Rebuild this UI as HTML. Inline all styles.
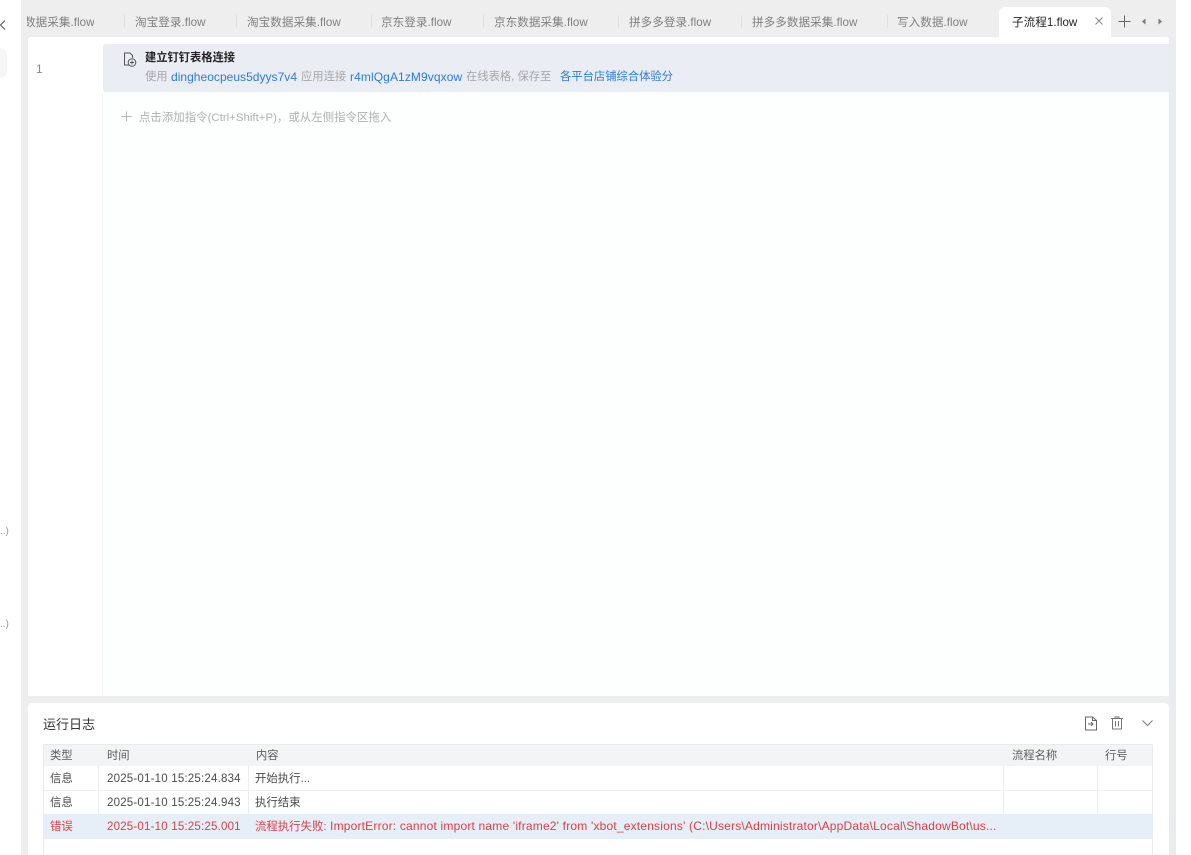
<!DOCTYPE html>
<html lang="zh-CN">
<head>
<meta charset="utf-8">
<style>
html,body{margin:0;padding:0;background:#fff}
body{width:1191px;height:855px;position:relative;overflow:hidden;font-family:"Liberation Sans","Noto Sans CJK SC",sans-serif;font-size:11px;color:#555}
.a{position:absolute;white-space:nowrap}
.tab{position:absolute;top:15px;height:15px;line-height:15px;font-size:11.6px;letter-spacing:.03px;color:#808080;white-space:nowrap}
.sep{position:absolute;top:15px;width:1px;height:13px;background:#e0e0e0}
.blue{color:#2a7cdb}
.g{color:#a6a6a6}
.h{position:absolute;top:748px;height:16px;line-height:16px;font-size:11.3px;color:#5c5c5c;white-space:nowrap}
.c{position:absolute;height:16px;line-height:16px;font-size:11.4px;color:#4a4a4a;white-space:nowrap}
.t{font-size:11.5px;letter-spacing:.2px}
.r{color:#d9404a}
.v{position:absolute;width:1px;background:#ecedf0}
</style>
</head>
<body>
<!-- outer panel -->
<div class="a" style="left:21px;top:0;width:1155px;height:855px;background:#eeeeef"></div>
<div class="a" style="left:1169px;top:37px;width:7px;height:818px;background:#eaecf2"></div>

<!-- left remnants -->
<svg class="a" style="left:0;top:18px" width="6" height="14" viewBox="0 0 6 14"><path d="M5 2.5 L0.5 7 L5 11.5" fill="none" stroke="#555" stroke-width="1"/></svg>
<div class="a" style="left:0;top:48px;width:7px;height:30px;background:#f6f6f7;border-radius:0 7px 7px 0"></div>
<div class="a" style="left:0;top:526px;font-size:10px;color:#999">..)</div>
<div class="a" style="left:0;top:619px;font-size:10px;color:#999">..)</div>

<!-- tabs -->
<div class="tab" style="left:27px;width:67px;overflow:hidden"><span style="margin-left:-3px">数据采集.flow</span></div>
<div class="sep" style="left:124px"></div>
<div class="tab" style="left:135px">淘宝登录.flow</div>
<div class="sep" style="left:236px"></div>
<div class="tab" style="left:247px">淘宝数据采集.flow</div>
<div class="sep" style="left:371px"></div>
<div class="tab" style="left:381px">京东登录.flow</div>
<div class="sep" style="left:483px"></div>
<div class="tab" style="left:494px">京东数据采集.flow</div>
<div class="sep" style="left:618px"></div>
<div class="tab" style="left:629px">拼多多登录.flow</div>
<div class="sep" style="left:741px"></div>
<div class="tab" style="left:752px">拼多多数据采集.flow</div>
<div class="sep" style="left:887px"></div>
<div class="tab" style="left:897px">写入数据.flow</div>

<div class="a" style="left:999px;top:7px;width:112px;height:31px;background:#fff;border-radius:6px 6px 0 0"></div>
<div class="tab" style="left:1012px;color:#222">子流程1.flow</div>
<svg class="a" style="left:1094px;top:16px" width="10" height="10" viewBox="0 0 10 10"><path d="M1.5 1.5 L8.5 8.5 M8.5 1.5 L1.5 8.5" stroke="#888" stroke-width="1" fill="none"/></svg>
<svg class="a" style="left:1118px;top:15px" width="13" height="13" viewBox="0 0 13 13"><path d="M6.5 .5 V12.5 M.5 6.5 H12.5" stroke="#666" stroke-width="1" fill="none"/></svg>
<svg class="a" style="left:1141px;top:18px" width="6" height="7" viewBox="0 0 6 7"><path d="M4.5 .5 L1 3.5 L4.5 6.5 Z" fill="#777"/></svg>
<svg class="a" style="left:1157px;top:18px" width="6" height="7" viewBox="0 0 6 7"><path d="M1.5 .5 L5 3.5 L1.5 6.5 Z" fill="#777"/></svg>

<!-- editor -->
<div class="a" style="left:28px;top:37px;width:1141px;height:659px;background:#fff;border-radius:3px 3px 0 0"></div>
<div class="a" style="left:103px;top:92px;width:1066px;height:604px;background:#fdfefe"></div>
<div class="a" style="left:102px;top:92px;width:1px;height:604px;background:#f5f7f7"></div>
<div class="a" style="left:103px;top:44px;width:1066px;height:48px;background:#eaedf4;border-radius:3px 0 0 3px"></div>
<div class="a" style="left:36px;top:62px;font-size:12px;line-height:15px;color:#8a8a8a">1</div>

<svg class="a" style="left:123px;top:52px" width="14" height="15" viewBox="0 0 14 15"><path d="M6 13 H1.5 V1 H7 L9.5 3.5 V6" fill="none" stroke="#555" stroke-width="1"/><circle cx="9" cy="10.5" r="3.8" fill="#eaedf4" stroke="#555" stroke-width="1"/><path d="M9 8.5 V12.5 M7 10.5 H11" stroke="#555" stroke-width="1"/></svg>
<div class="a" style="left:145px;top:51px;font-size:11.25px;line-height:15px;font-weight:bold;color:#222">建立钉钉表格连接</div>
<div class="a g" style="left:145px;top:70px;line-height:15px;font-size:11.3px">使用</div>
<div class="a blue" style="left:171px;top:70px;line-height:15px;font-size:12px;letter-spacing:.03px">dingheocpeus5dyys7v4</div>
<div class="a g" style="left:301px;top:70px;line-height:15px;font-size:11.3px">应用连接</div>
<div class="a blue" style="left:350px;top:70px;line-height:15px;font-size:12px;letter-spacing:.1px">r4mlQgA1zM9vqxow</div>
<div class="a g" style="left:466px;top:70px;line-height:15px;font-size:11.3px">在线表格, 保存至</div>
<div class="a blue" style="left:560px;top:70px;line-height:15px;font-size:11.3px">各平台店铺综合体验分</div>

<svg class="a" style="left:121px;top:111px" width="11" height="11" viewBox="0 0 11 11"><path d="M5.5 .5 V10.5 M.5 5.5 H10.5" stroke="#b5b5b5" stroke-width="1" fill="none"/></svg>
<div class="a" style="left:139px;top:111px;line-height:15px;font-size:11.45px;color:#b0b0b0">点击添加指令(Ctrl+Shift+P)，或从左侧指令区拖入</div>

<!-- log panel -->
<div class="a" style="left:28px;top:703px;width:1141px;height:152px;background:#fff;border-radius:4px 4px 0 0"></div>
<div class="a" style="left:43px;top:716px;font-size:13px;line-height:17px;color:#333">运行日志</div>

<svg class="a" style="left:1084px;top:716px" width="14" height="15" viewBox="0 0 14 15"><path d="M1.5 1 H8.5 L12.5 4.5 V14 H1.5 Z M8.5 1 V4.5 H12.5" fill="none" stroke="#666" stroke-width="1"/><path d="M4 8 H9 M7 6 L9 8 L7 10" fill="none" stroke="#666" stroke-width="1"/></svg>
<svg class="a" style="left:1110px;top:716px" width="14" height="14" viewBox="0 0 14 14"><path d="M1 2.5 H13 M5 2.5 V1 H9 V2.5 M2.5 2.5 V13 H11.5 V2.5 M5.5 5 V10.5 M8.5 5 V10.5" fill="none" stroke="#777" stroke-width="1"/></svg>
<svg class="a" style="left:1141px;top:719px" width="13" height="8" viewBox="0 0 13 8"><path d="M1.5 1.5 L6.5 6.5 L11.5 1.5" fill="none" stroke="#777" stroke-width="1"/></svg>

<!-- table -->
<div class="a" style="left:43px;top:744px;width:1110px;height:111px;border:solid #e8eaed;border-width:1px 1px 0 1px;border-radius:2px 2px 0 0;box-sizing:border-box"></div>
<div class="a" style="left:44px;top:745px;width:1108px;height:21px;background:#f2f4f6"></div>
<div class="h" style="left:50px">类型</div>
<div class="h" style="left:107px">时间</div>
<div class="h" style="left:256px">内容</div>
<div class="h" style="left:1012px">流程名称</div>
<div class="h" style="left:1105px">行号</div>

<div class="a" style="left:44px;top:790px;width:1108px;height:1px;background:#eceef0"></div>
<div class="a" style="left:44px;top:814px;width:1109px;height:25px;background:#e6eef7"></div>
<div class="v" style="left:98px;top:766px;height:48px"></div>
<div class="v" style="left:248px;top:766px;height:48px"></div>
<div class="v" style="left:1003px;top:766px;height:48px"></div>
<div class="v" style="left:1097px;top:766px;height:48px"></div>

<div class="c" style="left:50px;top:771px">信息</div>
<div class="c t" style="left:107px;top:771px">2025-01-10 15:25:24.834</div>
<div class="c" style="left:255px;top:771px">开始执行...</div>
<div class="c" style="left:50px;top:795px">信息</div>
<div class="c t" style="left:107px;top:795px">2025-01-10 15:25:24.943</div>
<div class="c" style="left:255px;top:795px">执行结束</div>
<div class="c r" style="left:50px;top:819px">错误</div>
<div class="c r t" style="left:107px;top:819px">2025-01-10 15:25:25.001</div>
<div class="c r" style="left:255px;top:818px;font-size:12px;letter-spacing:.19px"><span style="font-size:11.4px;letter-spacing:0">流程执行失败:</span> ImportError: cannot import name 'iframe2' from 'xbot_extensions' (C:\Users\Administrator\AppData\Local\ShadowBot\us...</div>
</body>
</html>
